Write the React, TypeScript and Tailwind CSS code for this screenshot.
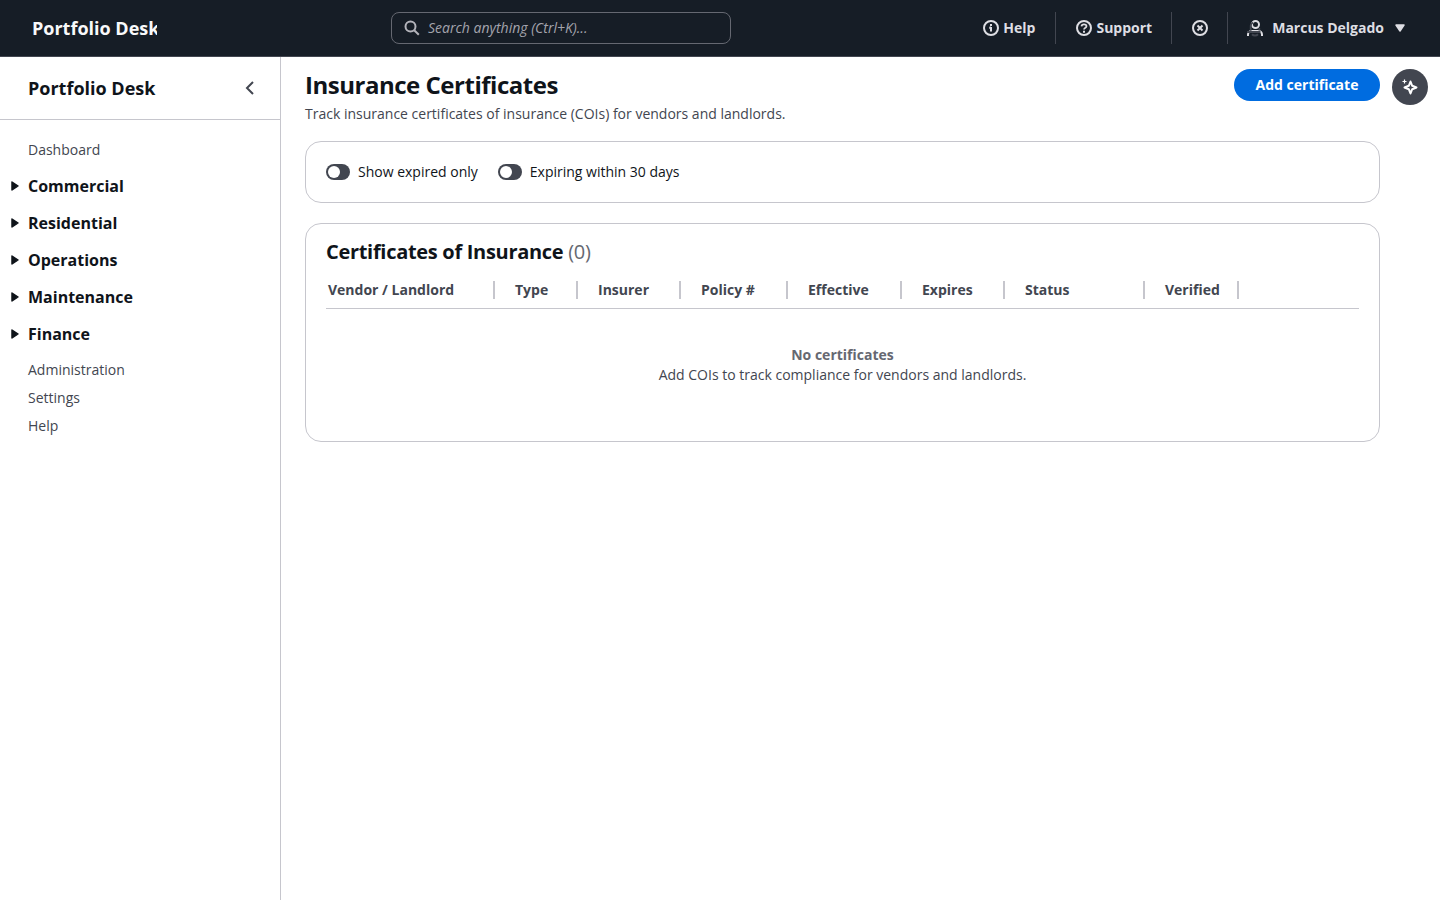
import type { ReactNode } from "react"

// ── Icons (16px grid) ─────────────────────────────────────────────────────────
function Icon({ children, className = "" }: { children: ReactNode; className?: string }) {
  return (
    <svg aria-hidden viewBox="0 0 16 16" className={`size-4 shrink-0 ${className}`} fill="none" stroke="currentColor" strokeWidth={2}>
      {children}
    </svg>
  )
}

const InfoIcon = () => (
  <Icon>
    <circle cx="8" cy="8" r="7" />
    <path d="M8 11V8H6.5M8 4v2" />
    <path d="M6.5 7.5H8M8 7v4.5" />
  </Icon>
)

const HelpIcon = () => (
  <Icon>
    <circle cx="8" cy="8" r="7" />
    <path d="M5.5 6.4C5.6 5 6.5 4.3 8 4.3s2.5.8 2.5 2C10.500 7.800 8 7.700 8 9.600" strokeWidth={1.7} />
    <path d="M8 10.800v2" />
  </Icon>
)

const CloseCircleIcon = () => (
  <Icon>
    <circle cx="8" cy="8" r="7" />
    <path d="m5.500 5.500 5 5M10.500 5.500l-5 5" />
  </Icon>
)

// Profile glyph with the muted bell layered over it.
const UserIcon = () => (
  <Icon className="overflow-visible">
    <path d="M1 16v-1.500A3.500 3.500 0 0 1 4.500 11h7a3.500 3.500 0 0 1 3.500 3.500V16" />
    <circle cx="8.500" cy="4.500" r="3.500" />
    <g className="text-[#424650]" stroke="currentColor">
      <path d="M3.700 10.800V6.500A4.300 4.300 0 0 1 6 2.500M12.300 10.500V8M0 12h13.500" strokeWidth={1.800} />
      <path d="M5 14.300c1.500 1.600 4.500 1.600 6 0" />
    </g>
  </Icon>
)

// ── Top navigation ────────────────────────────────────────────────────────────
function TopNav() {
  return (
    <header className="flex h-[57px] shrink-0 items-center border-b border-[#424650] bg-[#161d26] text-sm font-bold text-[#dedee3]">
      <div className="ml-8 w-[359px]">
        <span className="block w-[125px] overflow-hidden whitespace-nowrap text-lg leading-[22px] text-[#f9f9fa]">Portfolio Desk</span>
      </div>
      <div className="flex h-8 w-[340px] items-center rounded-lg border border-[#656871] pl-3 font-normal italic text-[#a4a4ad]">
        <Icon className="mr-2 text-[#b4b4bb]">
          <circle cx="6.500" cy="6.500" r="5" />
          <path d="m10.200 10.200 4.600 4.600" />
        </Icon>
        Search anything (Ctrl+K)...
      </div>
      <div className="ml-auto flex h-8 items-center">
        <a className="flex h-full items-center gap-1 border-r border-[#424650] pr-5"><InfoIcon />Help</a>
        <a className="flex h-full items-center gap-1 border-r border-[#424650] pl-5 pr-[19px]"><HelpIcon />Support</a>
        <a className="flex h-full items-center border-r border-[#424650] pl-5 pr-[19px]"><CloseCircleIcon /></a>
        <a className="flex h-full items-center pl-[19px] pr-8">
          <UserIcon />
          <span className="ml-[9px]">Marcus Delgado</span>
          <Icon className="ml-2">
            <path d="M4 5h8l-4 6z" fill="currentColor" strokeLinejoin="round" strokeWidth={1.500} />
          </Icon>
        </a>
      </div>
    </header>
  )
}

// ── Side navigation ───────────────────────────────────────────────────────────
const SECTIONS = ["Commercial", "Residential", "Operations", "Maintenance", "Finance"]
const LINKS = ["Administration", "Settings", "Help"]

function SideNav() {
  return (
    <aside className="w-[281px] shrink-0 border-r border-[#c6c6cd]">
      <div className="flex h-[63px] items-center justify-between border-b border-[#c6c6cd] pl-7 pr-[22px]">
        <h2 className="text-lg font-bold leading-[22px]">Portfolio Desk</h2>
        <Icon className="text-[#424650]"><path d="m11 2-6 6 6 6" /></Icon>
      </div>
      <nav className="pt-5">
        <a className="block pl-7 text-sm text-[#424650]">Dashboard</a>
        <ul className="mt-4 space-y-[17px]">
          {SECTIONS.map((s) => (
            <li key={s} className="flex h-5 items-center pl-[7px] text-base font-bold leading-5">
              <Icon className="mr-[5px]">
                <path d="M5 4v8l6-4z" fill="currentColor" strokeLinejoin="round" strokeWidth={1.500} />
              </Icon>
              {s}
            </li>
          ))}
        </ul>
        <ul className="mt-4 space-y-2 pl-7 text-sm text-[#424650]">
          {LINKS.map((l) => <li key={l}>{l}</li>)}
        </ul>
      </nav>
    </aside>
  )
}

// ── Content ───────────────────────────────────────────────────────────────────
function Toggle({ label }: { label: string }) {
  return (
    <label className="flex items-center gap-2 text-sm">
      <span className="flex h-4 w-6 items-center rounded-full bg-[#424650] pl-0.5">
        <span className="size-3 rounded-full bg-white" />
      </span>
      {label}
    </label>
  )
}

const COLUMNS = [
  { label: "Vendor / Landlord", width: "w-[169px] pl-0.5" },
  { label: "Type", width: "w-[83px] pl-5" },
  { label: "Insurer", width: "w-[103px] pl-5" },
  { label: "Policy #", width: "w-[107px] pl-5" },
  { label: "Effective", width: "w-[114px] pl-5" },
  { label: "Expires", width: "w-[103px] pl-5" },
  { label: "Status", width: "w-[140px] pl-5" },
  { label: "Verified", width: "w-[94px] pl-5" },
]

function CertificatesTable() {
  return (
    <section className="mt-5 h-[219px] rounded-2xl border border-[#c6c6cd] px-5 pt-4">
      <h2 className="text-xl font-bold leading-6 tracking-[-0.015em]">
        Certificates of Insurance <span className="font-normal text-[#656871]">(0)</span>
      </h2>
      <div className="mt-4 flex h-[29px] border-b border-[#c6c6cd] text-sm font-bold text-[#424650]">
        {COLUMNS.map((c) => (
          <div key={c.label} className={`flex h-5 items-center justify-between whitespace-nowrap ${c.width}`}>
            {c.label}
            <span className="h-[18px] w-0.5 bg-[#c6c6cd]" />
          </div>
        ))}
      </div>
      <div className="mt-9 text-center text-sm text-[#424650]">
        <b className="block text-[#656871]">No certificates</b>
        <p>Add COIs to track compliance for vendors and landlords.</p>
      </div>
    </section>
  )
}

export default function App() {
  return (
    <div className="flex h-screen flex-col overflow-hidden bg-white font-['Open_Sans',sans-serif] text-[#0f141a]">
      <TopNav />
      <div className="flex min-h-0 flex-1">
        <SideNav />
        <main className="w-[1099px] pl-6 pt-3">
          <div className="flex items-start justify-between">
            <div>
              <h1 className="pt-px text-2xl font-bold leading-[30px] tracking-[-0.02em]">Insurance Certificates</h1>
              <p className="mt-1 text-sm leading-5 text-[#424650]">Track insurance certificates of insurance (COIs) for vendors and landlords.</p>
            </div>
            <button className="h-8 w-[146px] rounded-full bg-[#006ce0] text-sm font-bold text-white">Add certificate</button>
          </div>
          <section className="mt-[17px] flex h-[62px] items-center gap-5 rounded-2xl border border-[#c6c6cd] px-5">
            <Toggle label="Show expired only" />
            <Toggle label="Expiring within 30 days" />
          </section>
          <CertificatesTable />
        </main>
        <div className="pl-3 pt-3">
          <button className="flex size-9 items-center justify-center rounded-full bg-[#424650] text-white">
            <Icon>
              <path d="M8.500 2.500 10.200 6.800 14.500 8.500 10.200 10.200 8.500 14.500 6.800 10.200 2.500 8.500 6.800 6.800Z" strokeLinejoin="round" />
              <path d="M2.500.500v4M.500 2.500h4" strokeWidth={1.200} />
            </Icon>
          </button>
        </div>
      </div>
    </div>
  )
}
